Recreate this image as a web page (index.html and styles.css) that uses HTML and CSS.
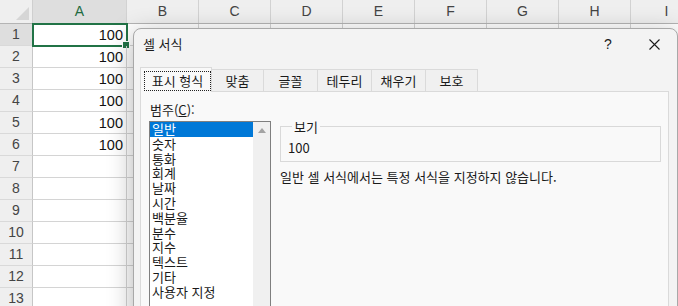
FILE: index.html
```html
<!DOCTYPE html>
<html lang="ko">
<head>
  <meta charset="UTF-8" />
  <title>셀 서식</title>
  <link rel="stylesheet" href="styles.css">
</head>
<body>

  <div class="sheet">
    <div class="heads">
      <div class="corner"></div>
      <div class="ch col-a picked">A</div>
      <div class="ch">B</div>
      <div class="ch">C</div>
      <div class="ch">D</div>
      <div class="ch">E</div>
      <div class="ch">F</div>
      <div class="ch">G</div>
      <div class="ch">H</div>
      <div class="ch">I</div>
    </div>
    <div class="row"><div class="rh picked">1</div><div class="cell active">100</div><div class="rest"></div></div>
    <div class="row"><div class="rh">2</div><div class="cell">100</div><div class="rest"></div></div>
    <div class="row"><div class="rh">3</div><div class="cell">100</div><div class="rest"></div></div>
    <div class="row"><div class="rh">4</div><div class="cell">100</div><div class="rest"></div></div>
    <div class="row"><div class="rh">5</div><div class="cell">100</div><div class="rest"></div></div>
    <div class="row"><div class="rh">6</div><div class="cell">100</div><div class="rest"></div></div>
    <div class="row"><div class="rh">7</div><div class="cell"></div><div class="rest"></div></div>
    <div class="row"><div class="rh">8</div><div class="cell"></div><div class="rest"></div></div>
    <div class="row"><div class="rh">9</div><div class="cell"></div><div class="rest"></div></div>
    <div class="row"><div class="rh">10</div><div class="cell"></div><div class="rest"></div></div>
    <div class="row"><div class="rh">11</div><div class="cell"></div><div class="rest"></div></div>
    <div class="row"><div class="rh">12</div><div class="cell"></div><div class="rest"></div></div>
    <div class="row"><div class="rh">13</div><div class="cell"></div><div class="rest"></div></div>
  </div>

  <div class="dialog">
    <div class="titlebar">
      <span class="title">셀 서식</span>
      <div class="caption-btns">
        <span class="cap-btn">?</span>
        <span class="cap-btn">
          <svg width="11" height="11" viewBox="0 0 11 11">
            <path d="M0.5 0.5 L10.5 10.5 M10.5 0.5 L0.5 10.5" stroke="#1a1a1a" stroke-width="1.1" fill="none"/>
          </svg>
        </span>
      </div>
    </div>

    <div class="tabs">
      <div class="tab current"><span class="focus">표시 형식</span></div>
      <div class="tab w52">맞춤</div>
      <div class="tab">글꼴</div>
      <div class="tab">테두리</div>
      <div class="tab">채우기</div>
      <div class="tab w52">보호</div>
    </div>

    <div class="panel">
      <div class="left-col">
        <div class="label">범주(<u>C</u>):</div>
        <div class="listbox">
          <ul class="items">
            <li class="on">일반</li>
            <li>숫자</li>
            <li>통화</li>
            <li>회계</li>
            <li>날짜</li>
            <li>시간</li>
            <li>백분율</li>
            <li>분수</li>
            <li>지수</li>
            <li>텍스트</li>
            <li>기타</li>
            <li>사용자 지정</li>
          </ul>
          <div class="scrollbar"><span class="arrow-up"></span></div>
        </div>
      </div>

      <div class="right-col">
        <fieldset class="sample">
          <legend>보기</legend>
          <div class="sample-value">100</div>
        </fieldset>
        <p class="desc">일반 셀 서식에서는 특정 서식을 지정하지 않습니다.</p>
      </div>
    </div>
  </div>

</body>
</html>
```

FILE: styles.css
```css
* {
  box-sizing: border-box;
}

html, body {
  margin: 0;
}

body {
  width: 678px;
  height: 306px;
  overflow: hidden;
  position: relative;
  background: #fff;
  font-family: "Liberation Sans", Arial, sans-serif;
}

/* spreadsheet behind the dialog */

.sheet {
  display: flex;
  flex-direction: column;
}

.heads {
  display: flex;
  height: 24px;
  background: #efefef;
  border-bottom: 1px solid #b4b4b4;
}

.corner {
  flex: 0 0 33px;
  border-right: 1px solid #cfcfcf;
  position: relative;
}

.corner::after {
  content: "";
  position: absolute;
  right: 3px;
  bottom: 3px;
  border-style: solid;
  border-width: 0 0 13px 13px;
  border-color: transparent transparent #d6d6d6 transparent;
}

.ch {
  flex: 0 0 72px;
  border-right: 1px solid #d2d2d2;
  text-align: center;
  line-height: 23px;
  font-size: 14px;
  color: #444;
}

.ch.col-a {
  flex-basis: 94px;
}

.picked {
  background: #dedede;
  color: #1e6b41;
}

.row {
  display: flex;
  height: 22px;
}

.rh {
  flex: 0 0 33px;
  background: #efefef;
  border-right: 1px solid #c6c6c6;
  border-bottom: 1px solid #d9d9d9;
  text-align: center;
  line-height: 21px;
  font-size: 14px;
  color: #444;
}

.rh.picked {
  background: #dedede;
}

.cell {
  flex: 0 0 94px;
  border-right: 1px solid #d4d4d4;
  border-bottom: 1px solid #d4d4d4;
  text-align: right;
  padding-right: 3px;
  font-size: 14.5px;
  line-height: 22px;
  color: #111;
  position: relative;
}

.cell.active {
  outline: 2px solid #217346;
  outline-offset: -1px;
}

.cell.active::after {
  content: "";
  position: absolute;
  right: -4px;
  bottom: -4px;
  width: 6px;
  height: 6px;
  background: #217346;
  border: 1px solid #fff;
}

.rest {
  flex: 0 0 576px;
  border-bottom: 1px solid #d4d4d4;
  background: repeating-linear-gradient(to right, transparent 0 71px, #d4d4d4 71px 72px);
}

/* format cells dialog */

.dialog {
  position: absolute;
  left: 133px;
  top: 28px;
  width: 545px;
  height: 300px;
  background: #f3f3f3;
  border: 1px solid #a8a8a8;
  border-radius: 8px;
  box-shadow: 0 6px 26px rgba(0, 0, 0, 0.3);
  font-family: "Noto Sans CJK KR", "Noto Sans", sans-serif;
  font-size: 13px;
  color: #1a1a1a;
}

.titlebar {
  display: flex;
  justify-content: space-between;
  height: 30px;
}

.title {
  padding-left: 9px;
  line-height: 30px;
}

.caption-btns {
  display: flex;
}

.cap-btn {
  width: 46px;
  height: 30px;
  display: flex;
  align-items: center;
  justify-content: center;
  font-size: 14px;
  font-family: "Liberation Sans", sans-serif;
}

.tabs {
  display: flex;
  align-items: flex-end;
  margin: 8px 0 0 6px;
  height: 24px;
  position: relative;
  z-index: 1;
}

.tab {
  width: 54px;
  height: 22px;
  border: 1px solid #dadada;
  border-left: none;
  border-bottom: none;
  background: #f0f0f0;
  text-align: center;
  line-height: 21px;
}

.tab.w52 {
  width: 52px;
}

.tab.current {
  width: 72px;
  height: 25px;
  margin-bottom: -1px;
  border-left: 1px solid #dadada;
  background: #f9f9f9;
  padding: 3px 0 0 3px;
}

.focus {
  display: block;
  width: 67px;
  height: 20px;
  border: 1px dotted #222;
  line-height: 18px;
  text-align: center;
}

.panel {
  display: flex;
  margin-left: 6px;
  width: 529px;
  height: 230px;
  background: #f9f9f9;
  border: 1px solid #dadada;
}

.left-col {
  margin-left: 8px;
}

.label {
  margin: 9px 0 3px 1px;
  line-height: 17px;
}

.listbox {
  display: flex;
  width: 122px;
  height: 200px;
  background: #fff;
  border: 1px solid #7f7f7f;
}

.items {
  list-style: none;
  margin: 0;
  padding: 0;
  width: 103px;
}

.items li {
  height: 14.8px;
  line-height: 14.8px;
  padding-left: 2px;
  white-space: nowrap;
}

.items li.on {
  background: #0078d7;
  color: #fff;
}

.scrollbar {
  width: 17px;
  background: #f0f0f0;
  display: flex;
  justify-content: center;
}

.arrow-up {
  margin-top: 6px;
  border-style: solid;
  border-width: 0 4px 5px 4px;
  border-color: transparent transparent #a3a3a3 transparent;
  height: 0;
}

.right-col {
  margin: 27px 0 0 9px;
  width: 381px;
}

.sample {
  margin: 0;
  padding: 6px 7px 5px;
  border: 1px solid #d9d9d9;
  min-width: 0;
}

.sample legend {
  margin-left: 4px;
  padding: 0 2px;
  line-height: 15px;
}

.sample-value {
  line-height: 16px;
}

.desc {
  margin: 7px 0 0;
  line-height: 16px;
}
```
